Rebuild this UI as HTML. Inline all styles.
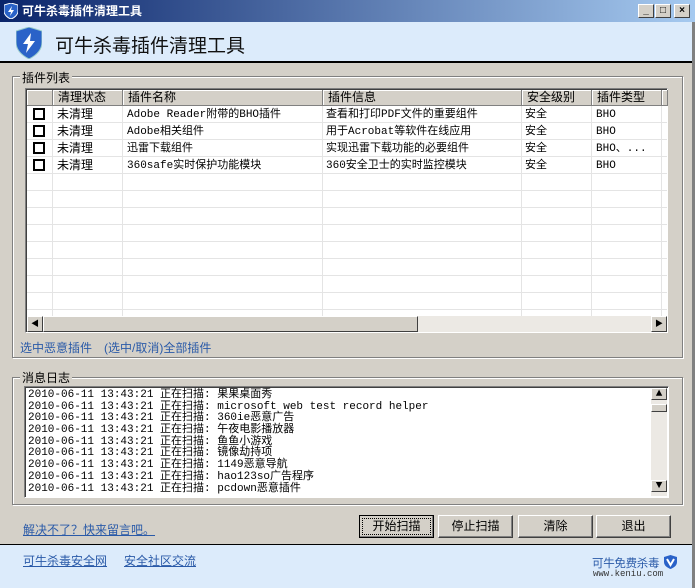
<!DOCTYPE html><html><head><meta charset="utf-8"><style>
*{margin:0;padding:0;box-sizing:border-box}
body{width:695px;height:588px;overflow:hidden;background:#d4d0c8;font-family:"Liberation Sans","SimSun","Noto Sans CJK SC",sans-serif;font-size:12px;position:relative;color:#000}
.a{position:absolute}
.tb{left:0;top:0;width:695px;height:22px;background:linear-gradient(90deg,#0a246a,#a6caf0);color:#fff;font-weight:bold;font-size:12px;line-height:22px;padding-left:22px}
.wb{width:16px;height:14px;background:#d4d0c8;border:1px solid;border-color:#fff #404040 #404040 #fff;top:4px;font-size:10px;text-align:center;line-height:12px;color:#000;font-weight:bold}
.hd{left:0;top:22px;width:695px;height:41px;background:#dcebfb;border-bottom:2px solid #000}
.gb{border:1px solid #808080;box-shadow:1px 1px 0 #fff inset,1px 1px 0 #fff}
.lg{background:#d4d0c8;padding:0 2px;font-size:12px}
.lst{left:25px;top:88px;width:643px;height:245px;background:#fff;border:1px solid;border-color:#808080 #fff #fff #808080;box-shadow:inset 1px 1px 0 #404040}
.hr{position:absolute;top:1px;height:16px;background:#d4d0c8;border-right:1px solid #808080;border-bottom:1px solid #808080;box-shadow:inset 1px 1px 0 #fff;padding-left:5px;line-height:15px}
.vl{position:absolute;top:17px;width:1px;height:211px;background:#e4e4e4}
.hl{position:absolute;left:1px;width:640px;height:1px;background:#e4e4e4}
.c{position:absolute;font-size:11px;line-height:17px;white-space:nowrap;font-family:"Liberation Mono","SimSun","Noto Sans CJK SC",monospace;margin-top:2px}
.cb{position:absolute;left:7px;width:12px;height:12px;border:2px solid #000;background:#fff}
.btn{top:515px;height:23px;background:#d4d0c8;border:1px solid;border-color:#fff #404040 #404040 #fff;box-shadow:inset -1px -1px 0 #808080;text-align:center;line-height:21px;font-size:12px}
.sb{background:#d4d0c8;border:1px solid;border-color:#fff #404040 #404040 #fff;width:16px;height:16px;font-size:8px;text-align:center;line-height:14px}
.lk{color:#2a5aa8;font-size:12px}
.log div{font-family:"Liberation Mono","SimSun","Noto Sans CJK SC",monospace;font-size:11px;line-height:11.7px;height:11.7px;white-space:nowrap}
</style></head><body>
<div class="a tb">可牛杀毒插件清理工具</div>
<svg class="a" style="left:4px;top:3px" width="14" height="16" viewBox="0 0 14 16"><path d="M7 0L14 2V8C14 12 10 15 7 16C4 15 0 12 0 8V2Z" fill="#2a62c8" stroke="#fff"/><path d="M8 3L4 9H7L6 13L10 7H7Z" fill="#fff"/></svg>
<div class="a wb" style="left:638px">_</div><div class="a wb" style="left:655px">□</div><div class="a wb" style="left:674px">×</div>
<div class="a hd"></div>
<svg class="a" style="left:16px;top:27px" width="26" height="32" viewBox="0 0 26 32"><path d="M13 0L26 4V15C26 24 19 29 13 32C7 29 0 24 0 15V4Z" fill="#2a62c8" stroke="#9cc" /><path d="M15 6L7 17H12L10 26L19 14H14Z" fill="#fff"/></svg>
<div class="a" style="left:55px;top:31px;font-size:19px;color:#111">可牛杀毒插件清理工具</div>
<div class="a gb" style="left:12px;top:76px;width:671px;height:282px"></div>
<div class="a lg" style="left:20px;top:69px">插件列表</div>
<div class="a lst">
<div class="hr" style="left:1px;width:26px"></div>
<div class="hr" style="left:27px;width:70px">清理状态</div>
<div class="hr" style="left:97px;width:200px">插件名称</div>
<div class="hr" style="left:297px;width:199px">插件信息</div>
<div class="hr" style="left:496px;width:70px">安全级别</div>
<div class="hr" style="left:566px;width:70px">插件类型</div>
<div class="hr" style="left:636px;width:6px"></div>
<div class="vl" style="left:26px"></div><div class="vl" style="left:96px"></div><div class="vl" style="left:296px"></div><div class="vl" style="left:495px"></div><div class="vl" style="left:565px"></div><div class="vl" style="left:635px"></div>
<div class="hl" style="top:33px"></div><div class="hl" style="top:50px"></div><div class="hl" style="top:67px"></div><div class="hl" style="top:84px"></div><div class="hl" style="top:101px"></div><div class="hl" style="top:118px"></div><div class="hl" style="top:135px"></div><div class="hl" style="top:152px"></div><div class="hl" style="top:169px"></div><div class="hl" style="top:186px"></div><div class="hl" style="top:203px"></div><div class="hl" style="top:220px"></div>
<div class="cb" style="top:19px"></div><div class="cb" style="top:36px"></div><div class="cb" style="top:53px"></div><div class="cb" style="top:70px"></div>
<div class="c" style="left:31px;top:15px;font-size:12px;font-family:'Liberation Sans','Noto Sans CJK SC',sans-serif">未清理</div><div class="c" style="left:31px;top:32px;font-size:12px;font-family:'Liberation Sans','Noto Sans CJK SC',sans-serif">未清理</div><div class="c" style="left:31px;top:49px;font-size:12px;font-family:'Liberation Sans','Noto Sans CJK SC',sans-serif">未清理</div><div class="c" style="left:31px;top:66px;font-size:12px;font-family:'Liberation Sans','Noto Sans CJK SC',sans-serif">未清理</div>
<div class="c" style="left:101px;top:16px">Adobe Reader附带的BHO插件</div><div class="c" style="left:101px;top:33px">Adobe相关组件</div><div class="c" style="left:101px;top:50px">迅雷下载组件</div><div class="c" style="left:101px;top:67px">360safe实时保护功能模块</div>
<div class="c" style="left:300px;top:16px">查看和打印PDF文件的重要组件</div><div class="c" style="left:300px;top:33px">用于Acrobat等软件在线应用</div><div class="c" style="left:300px;top:50px">实现迅雷下载功能的必要组件</div><div class="c" style="left:300px;top:67px">360安全卫士的实时监控模块</div>
<div class="c" style="left:499px;top:16px">安全</div><div class="c" style="left:499px;top:33px">安全</div><div class="c" style="left:499px;top:50px">安全</div><div class="c" style="left:499px;top:67px">安全</div>
<div class="c" style="left:570px;top:16px">BHO</div><div class="c" style="left:570px;top:33px">BHO</div><div class="c" style="left:570px;top:50px">BHO、...</div><div class="c" style="left:570px;top:67px">BHO</div>
<div class="a" style="left:1px;top:227px;width:640px;height:16px;background:#ece9e4"></div>
<div class="a sb" style="left:1px;top:227px">◀</div>
<div class="a" style="left:17px;top:227px;width:375px;height:16px;background:#d4d0c8;border:1px solid;border-color:#fff #404040 #404040 #fff"></div>
<div class="a sb" style="left:625px;top:227px">▶</div>
</div>
<div class="a lk" style="left:20px;top:339px">选中恶意插件　(选中/取消)全部插件</div>
<div class="a gb" style="left:12px;top:377px;width:671px;height:128px"></div>
<div class="a lg" style="left:20px;top:369px">消息日志</div>
<div class="a log" style="left:24px;top:386px;width:645px;height:112px;background:#fff;border:1px solid;border-color:#808080 #fff #fff #808080;box-shadow:inset 1px 1px 0 #404040;padding:3px 0 0 3px;overflow:hidden">
<div>2010-06-11 13:43:21 正在扫描: 果果桌面秀</div>
<div>2010-06-11 13:43:21 正在扫描: microsoft web test record helper</div>
<div>2010-06-11 13:43:21 正在扫描: 360ie恶意广告</div>
<div>2010-06-11 13:43:21 正在扫描: 午夜电影播放器</div>
<div>2010-06-11 13:43:21 正在扫描: 鱼鱼小游戏</div>
<div>2010-06-11 13:43:21 正在扫描: 镜像劫持项</div>
<div>2010-06-11 13:43:21 正在扫描: 1149恶意导航</div>
<div>2010-06-11 13:43:21 正在扫描: hao123so广告程序</div>
<div>2010-06-11 13:43:21 正在扫描: pcdown恶意插件</div>
<div class="a" style="left:626px;top:1px;width:16px;height:108px;background:#ece9e4"></div>
<div class="a sb" style="left:626px;top:1px">▲</div>
<div class="a" style="left:626px;top:17px;width:16px;height:8px;background:#d4d0c8;border:1px solid;border-color:#fff #404040 #404040 #fff"></div>
<div class="a sb" style="left:626px;top:93px">▼</div>
</div>
<div class="a lk" style="left:23px;top:521px;text-decoration:underline">解决不了？快来留言吧。</div>
<div class="a btn" style="left:359px;width:75px;border:1px solid #000;outline:1px dotted #000;outline-offset:-4px">开始扫描</div>
<div class="a btn" style="left:438px;width:75px">停止扫描</div>
<div class="a btn" style="left:518px;width:75px">清除</div>
<div class="a btn" style="left:596px;width:75px">退出</div>
<div class="a" style="left:0;top:544px;width:695px;height:44px;background:#dcebfb;border-top:1px solid #000"></div>
<div class="a lk" style="left:23px;top:552px;text-decoration:underline">可牛杀毒安全网</div>
<div class="a lk" style="left:124px;top:552px;text-decoration:underline">安全社区交流</div>
<div class="a" style="left:592px;top:555px;color:#2a5aa8;font-size:11.5px;letter-spacing:-0.3px">可牛免费杀毒</div>
<div class="a" style="left:593px;top:569px;color:#333;font-size:9px;font-family:'Liberation Mono',monospace">www.keniu.com</div>
<svg class="a" style="left:664px;top:555px" width="13" height="14" viewBox="0 0 13 14"><path d="M6.5 0L13 2V7C13 11 9 13 6.5 14C4 13 0 11 0 7V2Z" fill="#2a62c8"/><path d="M3 4L6.5 10L10 4" stroke="#fff" stroke-width="2" fill="none"/></svg>
<div class="a" style="left:692px;top:22px;width:3px;height:566px;background:#808080"></div>
</body></html>
